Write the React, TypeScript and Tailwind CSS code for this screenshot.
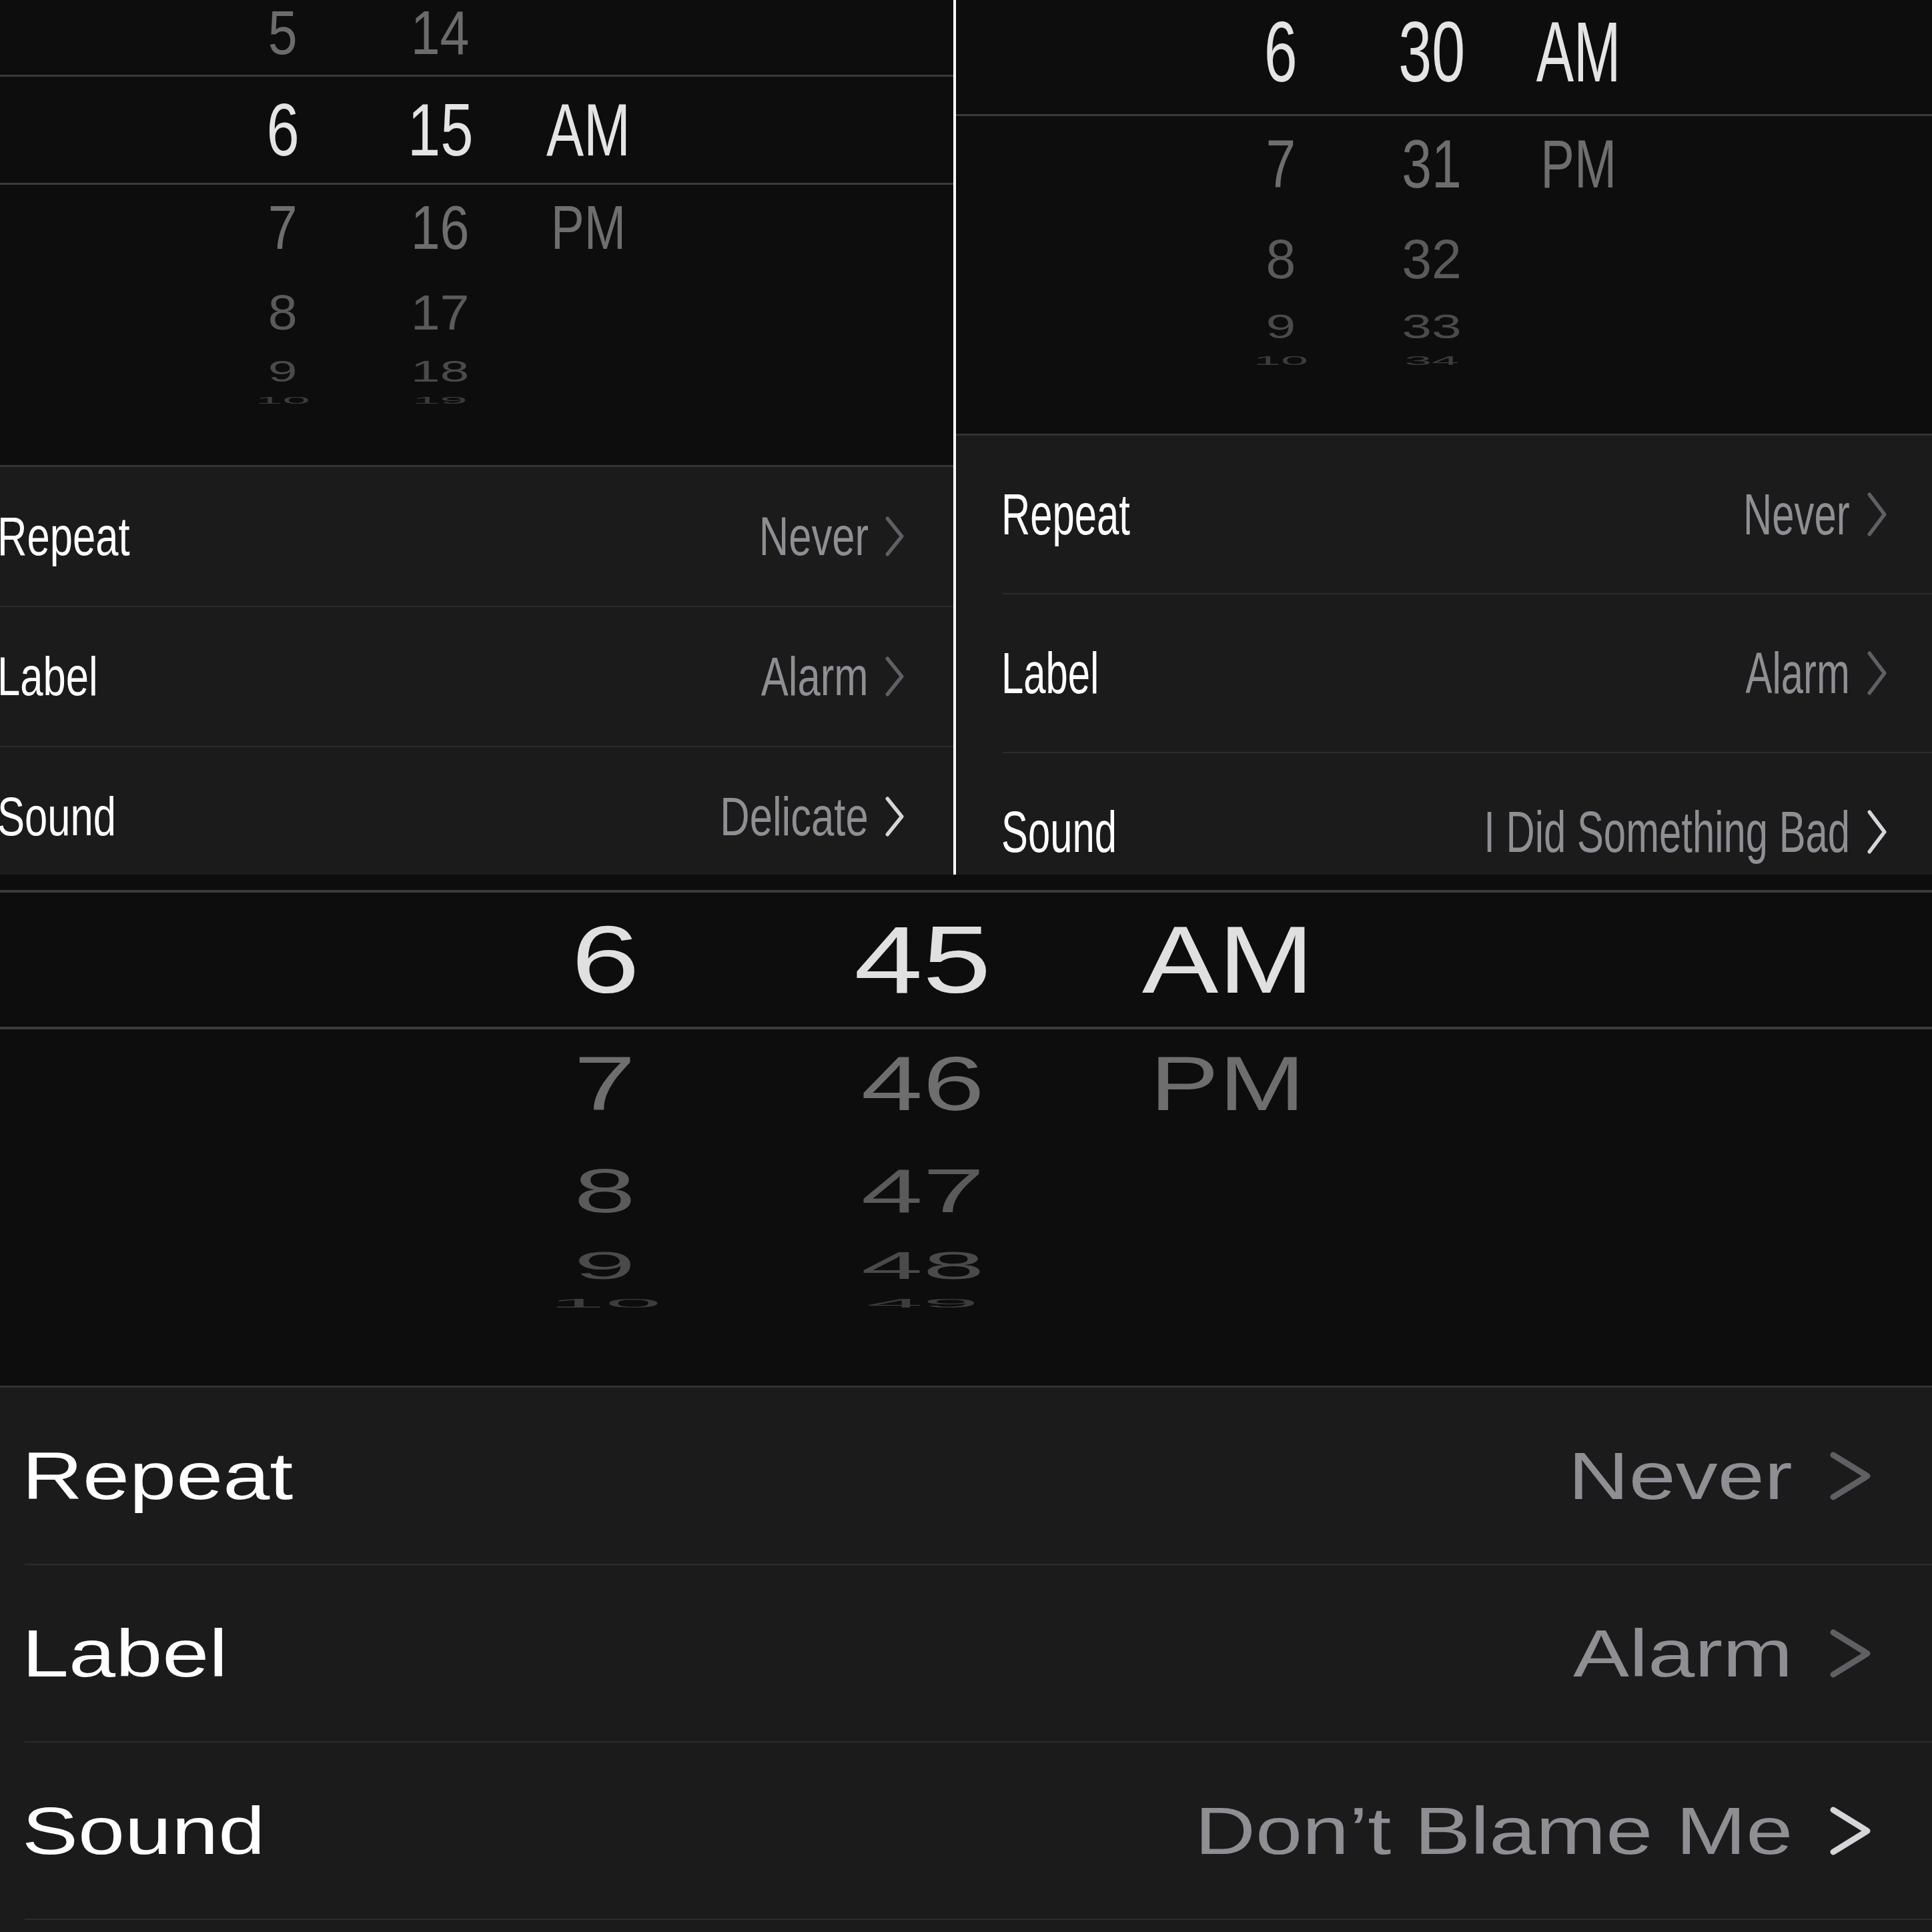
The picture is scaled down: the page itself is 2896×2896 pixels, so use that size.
import clsx from 'clsx'

type PickerRowProps = {
    values: string[]
    className: string
    cells: string[]
    text: string
    digit: string
    letter: string
}

function PickerRow({ values, className, cells, text, digit, letter }: PickerRowProps) {
    return (
        <div className={clsx('flex shrink-0 items-center', className)}>
            {values.map((v, i) => (
                <div key={i} className={clsx('flex justify-center', cells[i])}>
                    {v && (
                        <span className={clsx('inline-block whitespace-nowrap leading-none', text, i < 2 ? digit : letter)}>
                            {v}
                        </span>
                    )}
                </div>
            ))}
        </div>
    )
}

function Chevron({ w, h, sw, className }: { w: number; h: number; sw: number; className?: string }) {
    const p = sw / 2 + 0.5
    return (
        <svg width={w} height={h} viewBox={`0 0 ${w} ${h}`} fill="none" className={clsx('shrink-0', className)}>
            <polyline
                points={`${p},${p} ${w - p},${h / 2} ${p},${h - p}`}
                stroke="currentColor"
                strokeWidth={sw}
                strokeLinecap="round"
                strokeLinejoin="round"
            />
        </svg>
    )
}

type RowStyle = {
    row: string
    text: string
    shift: string
    gap: string
    chevron: { w: number; h: number; sw: number }
}

function SettingRow({ label, value, bright, s }: { label: string; value: string; bright?: boolean; s: RowStyle }) {
    return (
        <div className={clsx('flex shrink-0 items-center justify-between', s.row)}>
            <span className={clsx('inline-block origin-left whitespace-nowrap leading-none text-white', s.text, s.shift)}>
                {label}
            </span>
            <div className={clsx('flex items-center', s.gap)}>
                <span className={clsx('inline-block origin-right whitespace-nowrap leading-none text-[#8e8e93]', s.text)}>
                    {value}
                </span>
                <Chevron {...s.chevron} className={bright ? 'text-[#d6d6da]' : 'text-[#5f5f64]'} />
            </div>
        </div>
    )
}

const tlCells = ['w-[236px]', 'w-[236px]', 'w-[208px]']
const trCells = ['w-[226px]', 'w-[226px]', 'w-[214px]']
const btCells = ['w-[476px]', 'w-[476px]', 'w-[438px]']

const tlRow: RowStyle = {
    row: 'h-[208px] pr-[74px]',
    text: 'text-[81px] scale-x-[0.76]',
    shift: '-ml-[4px]',
    gap: 'gap-[25px]',
    chevron: { w: 28, h: 60, sw: 5.5 },
}

const trRow: RowStyle = {
    row: 'h-[236px] pl-[68px] pr-[68px]',
    text: 'text-[88px] scale-x-[0.68]',
    shift: '',
    gap: 'gap-[26px]',
    chevron: { w: 29, h: 66, sw: 5.5 },
}

const btRow: RowStyle = {
    row: 'h-[264px] pl-[33px] pr-[92px]',
    text: 'text-[100px] scale-x-[1.26]',
    shift: '',
    gap: 'gap-[56px]',
    chevron: { w: 61, h: 73, sw: 9 },
}

export default function App() {
    return (
        <div className="flex h-[2896px] w-[2896px] flex-col overflow-hidden bg-[#0d0d0d] font-['Liberation_Sans',Arial,sans-serif]">
            {/* Top: two squeezed screenshots */}
            <div className="flex h-[1311px] shrink-0">
                {/* Left: 6:15 */}
                <section className="flex w-[1429px] shrink-0 flex-col overflow-hidden">
                    <div className="flex h-[700px] shrink-0 flex-col">
                        <PickerRow
                            className="h-[112px] pb-[14px] pl-[306px]"
                            cells={tlCells}
                            values={['5', '14', '']}
                            text="text-[100px] text-[#6b6b6b] scale-y-[0.92]"
                            digit="scale-x-[0.79]"
                            letter="scale-x-[0.75]"
                        />
                        <div className="h-[3px] shrink-0 bg-[#3a3a3a]" />
                        <PickerRow
                            className="h-[159px] pl-[306px]"
                            cells={tlCells}
                            values={['6', '15', 'AM']}
                            text="text-[112px] text-[#e4e4e4]"
                            digit="scale-x-[0.79]"
                            letter="scale-x-[0.75]"
                        />
                        <div className="h-[3px] shrink-0 bg-[#3a3a3a]" />
                        <PickerRow
                            className="h-[128px] pl-[306px]"
                            cells={tlCells}
                            values={['7', '16', 'PM']}
                            text="text-[100px] text-[#6e6e6e] scale-y-[0.92]"
                            digit="scale-x-[0.79]"
                            letter="scale-x-[0.75]"
                        />
                        <PickerRow
                            className="h-[126px] pl-[306px]"
                            cells={tlCells}
                            values={['8', '17', '']}
                            text="text-[100px] text-[#5a5a5a] scale-y-[0.74]"
                            digit="scale-x-[0.79]"
                            letter="scale-x-[0.75]"
                        />
                        <PickerRow
                            className="h-[50px] pl-[306px]"
                            cells={tlCells}
                            values={['9', '18', '']}
                            text="text-[100px] text-[#4a4a4a] scale-y-[0.45]"
                            digit="scale-x-[0.79]"
                            letter="scale-x-[0.75]"
                        />
                        <PickerRow
                            className="h-[38px] pl-[306px]"
                            cells={tlCells}
                            values={['10', '19', '']}
                            text="text-[100px] text-[#3c3c3c] scale-y-[0.15]"
                            digit="scale-x-[0.74]"
                            letter="scale-x-[0.75]"
                        />
                        <div className="flex-1" />
                        <div className="h-[3px] shrink-0 bg-[#333335]" />
                    </div>
                    <div className="flex flex-1 flex-col overflow-hidden bg-[#1b1b1c]">
                        <SettingRow label="Repeat" value="Never" s={tlRow} />
                        <div className="h-[2px] shrink-0 bg-[#2c2c2e]" />
                        <SettingRow label="Label" value="Alarm" s={tlRow} />
                        <div className="h-[2px] shrink-0 bg-[#2c2c2e]" />
                        <SettingRow label="Sound" value="Delicate" bright s={tlRow} />
                    </div>
                </section>

                <div className="w-[4px] shrink-0 bg-white" />

                {/* Right: 6:30 */}
                <section className="flex min-w-0 flex-1 flex-col overflow-hidden">
                    <div className="flex h-[653px] shrink-0 flex-col">
                        <PickerRow
                            className="h-[171px] pb-[15px] pl-[374px]"
                            cells={trCells}
                            values={['6', '30', 'AM']}
                            text="text-[128px] text-[#e4e4e4]"
                            digit="scale-x-[0.70]"
                            letter="scale-x-[0.66]"
                        />
                        <div className="h-[3px] shrink-0 bg-[#3a3a3a]" />
                        <PickerRow
                            className="h-[142px] pl-[374px]"
                            cells={trCells}
                            values={['7', '31', 'PM']}
                            text="text-[115px] text-[#6e6e6e] scale-y-[0.89]"
                            digit="scale-x-[0.70]"
                            letter="scale-x-[0.66]"
                        />
                        <PickerRow
                            className="h-[144px] pl-[374px]"
                            cells={trCells}
                            values={['8', '32', '']}
                            text="text-[115px] text-[#5a5a5a] scale-y-[0.73]"
                            digit="scale-x-[0.70]"
                            letter="scale-x-[0.66]"
                        />
                        <PickerRow
                            className="h-[58px] pl-[374px]"
                            cells={trCells}
                            values={['9', '33', '']}
                            text="text-[115px] text-[#4a4a4a] scale-y-[0.44]"
                            digit="scale-x-[0.70]"
                            letter="scale-x-[0.66]"
                        />
                        <PickerRow
                            className="h-[44px] pl-[374px]"
                            cells={trCells}
                            values={['10', '34', '']}
                            text="text-[115px] text-[#3c3c3c] scale-y-[0.16]"
                            digit="scale-x-[0.64]"
                            letter="scale-x-[0.66]"
                        />
                        <div className="flex-1" />
                        <div className="h-[3px] shrink-0 bg-[#333335]" />
                    </div>
                    <div className="flex flex-1 flex-col overflow-hidden bg-[#1b1b1c]">
                        <SettingRow label="Repeat" value="Never" s={trRow} />
                        <div className="ml-[70px] h-[2px] shrink-0 bg-[#2c2c2e]" />
                        <SettingRow label="Label" value="Alarm" s={trRow} />
                        <div className="ml-[70px] h-[2px] shrink-0 bg-[#2c2c2e]" />
                        <SettingRow label="Sound" value="I Did Something Bad" bright s={trRow} />
                    </div>
                </section>
            </div>

            {/* Bottom: stretched 6:45 */}
            <section className="flex min-h-0 flex-1 flex-col overflow-hidden">
                <div className="flex h-[769px] shrink-0 flex-col">
                    <div className="h-[23px] shrink-0" />
                    <div className="h-[4px] shrink-0 bg-[#3c3c3c]" />
                    <PickerRow
                        className="h-[201px] pl-[669px]"
                        cells={btCells}
                        values={['6', '45', 'AM']}
                        text="text-[142px] text-[#e0e0e0]"
                        digit="scale-x-[1.3]"
                        letter="scale-x-[1.21]"
                    />
                    <div className="h-[4px] shrink-0 bg-[#3c3c3c]" />
                    <PickerRow
                        className="h-[162px] pl-[669px]"
                        cells={btCells}
                        values={['7', '46', 'PM']}
                        text="text-[128px] text-[#6e6e6e] scale-y-[0.9]"
                        digit="scale-x-[1.3]"
                        letter="scale-x-[1.21]"
                    />
                    <PickerRow
                        className="h-[160px] pl-[669px]"
                        cells={btCells}
                        values={['8', '47', '']}
                        text="text-[128px] text-[#5a5a5a] scale-y-[0.72]"
                        digit="scale-x-[1.3]"
                        letter="scale-x-[1.21]"
                    />
                    <PickerRow
                        className="h-[64px] pl-[669px]"
                        cells={btCells}
                        values={['9', '48', '']}
                        text="text-[128px] text-[#4a4a4a] scale-y-[0.45]"
                        digit="scale-x-[1.3]"
                        letter="scale-x-[1.21]"
                    />
                    <PickerRow
                        className="h-[50px] pl-[669px]"
                        cells={btCells}
                        values={['10', '49', '']}
                        text="text-[128px] text-[#3c3c3c] scale-y-[0.14]"
                        digit="scale-x-[1.18]"
                        letter="scale-x-[1.21]"
                    />
                    <div className="flex-1" />
                    <div className="h-[3px] shrink-0 bg-[#333335]" />
                </div>
                <div className="flex flex-1 flex-col overflow-hidden bg-[#1b1b1c]">
                    <SettingRow label="Repeat" value="Never" s={btRow} />
                    <div className="ml-[37px] h-[2px] shrink-0 bg-[#2c2c2e]" />
                    <SettingRow label="Label" value="Alarm" s={btRow} />
                    <div className="ml-[37px] h-[2px] shrink-0 bg-[#2c2c2e]" />
                    <SettingRow label="Sound" value="Don’t Blame Me" bright s={btRow} />
                    <div className="ml-[37px] h-[2px] shrink-0 bg-[#2c2c2e]" />
                </div>
            </section>
        </div>
    )
}
